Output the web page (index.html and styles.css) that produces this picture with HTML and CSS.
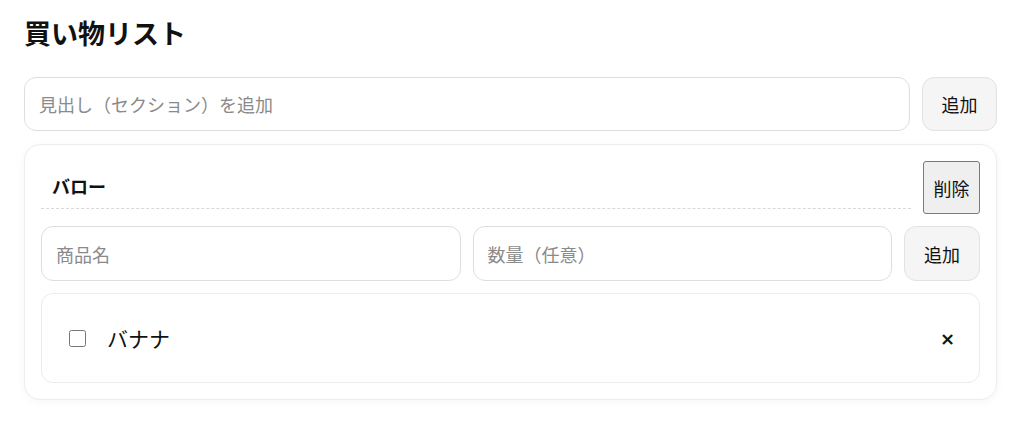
FILE: index.html
```html
<!DOCTYPE html>
<html lang="ja">
<head>
<meta charset="utf-8">
<title>買い物リスト</title>
<link rel="stylesheet" href="styles.css">
</head>
<body>
<h1 class="title">買い物リスト</h1>
<div class="row">
  <input class="field" type="text" placeholder="見出し（セクション）を追加">
  <button class="btn">追加</button>
</div>
<section class="card">
  <div class="card-head">
    <div class="section-name">バロー</div>
    <button class="del-btn">削除</button>
  </div>
  <div class="row row-item">
    <input class="field" type="text" placeholder="商品名">
    <input class="field" type="text" placeholder="数量（任意）">
    <button class="btn btn-sm">追加</button>
  </div>
  <div class="item">
    <input class="check" type="checkbox">
    <span class="item-name">バナナ</span>
    <button class="remove">×</button>
  </div>
</section>
</body>
</html>
```

FILE: styles.css
```css
* { box-sizing: border-box; }
body {
  margin: 0;
  padding: 15px 27px 24px 24px;
  font-family: "Noto Sans CJK JP", "Noto Sans", sans-serif;
  color: #111;
  background: #fff;
}
.title {
  margin: 0 0 26px 0;
  font-size: 27px;
  line-height: 36px;
  font-weight: 700;
}
.row {
  display: flex;
  gap: 12px;
}
.field {
  flex: 1;
  min-width: 0;
  height: 54px;
  padding: 0 14px;
  border: 1px solid #dedede;
  border-radius: 12px;
  font-family: inherit;
  font-size: 18px;
  color: #111;
  background: #fff;
  outline: none;
}
.field::placeholder { color: #8a8a8a; }
.btn {
  width: 75px;
  height: 54px;
  padding: 0;
  border: 1px solid #e2e2e2;
  border-radius: 12px;
  background: #f5f5f5;
  font-family: inherit;
  font-size: 18px;
  color: #111;
}
.row-item .field,
.row-item .btn { height: 55px; }
.btn-sm { width: 76px; }
.card {
  margin-top: 13px;
  padding: 16px;
  border: 1px solid #ededed;
  border-radius: 16px;
  background: #fff;
  box-shadow: 0 2px 8px rgba(0,0,0,0.04);
  display: flex;
  flex-direction: column;
  gap: 12px;
}
.card-head {
  display: flex;
  align-items: center;
  gap: 12px;
}
.section-name {
  flex: 1;
  padding: 7px 11px 8px 11px;
  border-bottom: 1px dashed #d8d8d8;
  font-size: 18px;
  line-height: 27px;
  font-weight: 700;
}
.del-btn {
  width: 57px;
  height: 53px;
  padding: 0;
  border: 1px solid #7a7a7a;
  border-radius: 3px;
  background: #efefef;
  font-family: inherit;
  font-size: 18px;
  color: #111;
}
.item {
  display: flex;
  align-items: center;
  height: 90px;
  padding: 0 21px 0 27px;
  border: 1px solid #ececec;
  border-radius: 12px;
}
.check {
  width: 17px;
  height: 17px;
  margin: 0 21px 0 0;
}
.item-name {
  flex: 1;
  font-size: 21px;
  line-height: 30px;
}
.remove {
  border: none;
  background: none;
  padding: 0 3px;
  font-family: "DejaVu Sans", sans-serif;
  font-size: 18px;
  font-weight: 700;
  color: #111;
}
```
